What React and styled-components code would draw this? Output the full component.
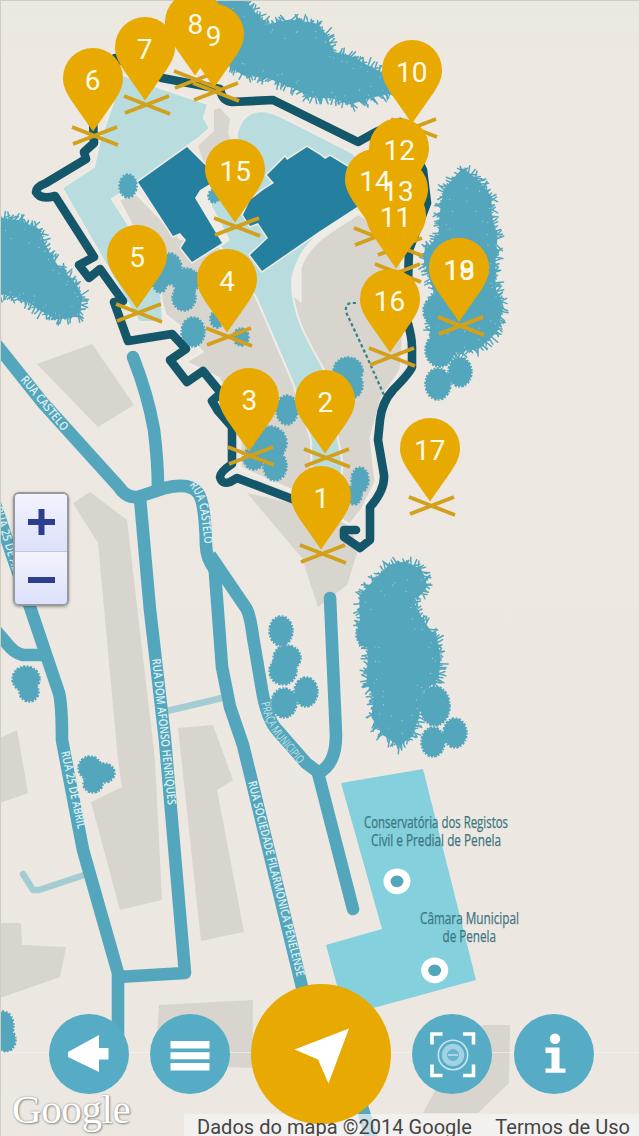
import React from 'react'
import styled, {createGlobalStyle} from 'styled-components'

const ROAD = '#54a6bc'
const WALL = '#14566a'
const GROUND = '#d8d4ce'
const PALE = '#b9dcde'
const CREAM = '#efece6'

const pins = [
  {n: 1, x: 321.3, y: 466},
  {n: 2, x: 325.3, y: 369.5},
  {n: 3, x: 249.3, y: 367.5},
  {n: 4, x: 227, y: 249},
  {n: 5, x: 137, y: 225},
  {n: 6, x: 92.7, y: 48.3},
  {n: 7, x: 144.7, y: 16.5},
  {n: 8, x: 195.3, y: -8},
  {n: 9, x: 213.5, y: 4},
  {n: 10, x: 411.7, y: 40.3},
  {n: 12, x: 399.3, y: 118.3},
  {n: 14, x: 375, y: 149},
  {n: 13, x: 398, y: 159},
  {n: 11, x: 395.5, y: 185},
  {n: 15, x: 235.3, y: 138.7},
  {n: 16, x: 389.5, y: 269},
  {n: 17, x: 429.7, y: 417.5},
  {n: 18, x: 459.3, y: 238},
  {n: 19, x: 459.3, y: 238},
]

// x, y, rx, ry
const bushes = [
  [438, 384, 12, 15], [460, 372, 11, 14], [436, 311, 12, 14], [440, 350, 14, 16],
  [435, 706, 14, 19], [433, 742, 11, 14], [455, 733, 11, 14], [366, 634, 9, 12],
  [281, 631, 11, 14], [287, 658, 13, 12], [283, 671, 13, 13], [284, 703, 12, 14], [306, 692, 11, 14],
  [26, 679, 13, 12], [29, 692, 9, 9],
  [90, 768, 11, 11], [104, 773, 10, 9], [93, 784, 9, 8],
  [3, 1026, 10, 14], [6, 1040, 9, 11],
  [128, 186, 8, 11], [170, 269, 11, 15], [160, 281, 7, 11], [186, 281, 13, 12], [184, 298, 11, 12],
  [193, 332, 11, 14], [217, 319, 6, 8], [241, 337, 7, 8], [287, 410, 10, 14],
  [270, 443, 16, 16], [275, 466, 11, 14], [254, 458, 10, 11],
  [348, 371, 14, 13], [353, 385, 9, 12], [360, 480, 8, 12], [354, 495, 7, 9], [214, 196, 5, 6],
]

const thickets = [
  [[215, -5], [246, 3], [256, 16], [268, 26], [290, 21], [316, 25], [326, 36], [332, 53], [350, 57], [366, 66], [382, 74], [392, 92], [372, 96], [350, 103], [334, 97], [312, 96], [292, 86], [270, 77], [244, 74], [225, 62]],
  [[-5, 218], [20, 222], [38, 230], [45, 248], [57, 267], [72, 281], [81, 297], [78, 315], [58, 318], [42, 310], [28, 300], [12, 294], [-5, 293]],
  [[463, 170], [477, 181], [490, 197], [490, 217], [496, 236], [494, 262], [494, 288], [502, 306], [496, 331], [479, 347], [460, 350], [436, 356], [431, 330], [438, 300], [430, 275], [424, 255], [440, 235], [441, 215], [445, 190]],
  [[405, 563], [420, 570], [426, 586], [412, 602], [421, 620], [436, 640], [439, 660], [437, 680], [421, 690], [418, 714], [412, 734], [399, 744], [384, 734], [373, 717], [375, 698], [368, 682], [369, 662], [369, 645], [362, 630], [361, 615], [361, 596], [376, 580], [390, 566]],
]

const rand = (i) => {
  const v = Math.sin(i * 127.1 + 11.7) * 43758.5453
  return v - Math.floor(v)
}

// short leaves growing outward from every side of the outline
const leaves = (pts) => {
  let d = ''
  let k = 1
  pts.forEach(([x1, y1], i) => {
    const [x2, y2] = pts[(i + 1) % pts.length]
    const len = Math.hypot(x2 - x1, y2 - y1)
    const out = Math.atan2(y2 - y1, x2 - x1) - Math.PI / 2
    for (let t = 0; t < len; t += 1.9) {
      const a = out + (rand(k) - 0.5) * 1.9
      const r = 4 + rand(k + 500) * 7
      const inset = rand(k + 900) * 3
      const x = x1 + ((x2 - x1) * t) / len - Math.cos(out) * inset
      const y = y1 + ((y2 - y1) * t) / len - Math.sin(out) * inset
      d += `M${x.toFixed(1)} ${y.toFixed(1)}l${(Math.cos(a) * r).toFixed(1)} ${(Math.sin(a) * r).toFixed(1)}`
      k++
    }
  })
  return d
}

const specks = (pts) => {
  const cx = pts.reduce((s, p) => s + p[0], 0) / pts.length
  const cy = pts.reduce((s, p) => s + p[1], 0) / pts.length
  return pts.flatMap(([x, y], i) => [0.93, 0.8].map((f, j) => {
    const g = f - rand(i * 3 + j) * 0.12
    return [cx + (x - cx) * g + rand(i + j) * 5, cy + (y - cy) * g + rand(i - j) * 5]
  }))
}

function Thicket({pts}) {
  return (
    <g>
      <polygon points={pts.join(' ')} fill={ROAD} stroke={ROAD} strokeWidth='3' strokeLinejoin='round' />
      <path d={leaves(pts)} stroke={ROAD} strokeWidth='1.5' strokeLinecap='round' />
      {specks(pts).map(([x, y], i) => <circle key={i} cx={x} cy={y} r='0.6' fill='#a5cdd6' />)}
    </g>
  )
}

function Bush({x, y, rx, ry}) {
  return (
    <g fill={ROAD} stroke={ROAD}>
      <ellipse cx={x} cy={y} rx={rx} ry={ry} strokeWidth='1' />
      <ellipse cx={x} cy={y} rx={rx} ry={ry} strokeWidth='3.5' strokeDasharray='1.6 1.1 2.4 1.5' />
    </g>
  )
}

function Terrain() {
  return (
    <Drawing viewBox='0 0 639 1136' fill='none'>
      <defs>
        <path id='castelo' d='M20 380 L64 433' />
        <path id='castelo2' d='M189 485 Q199 497 201 515 L205 546' />
        <path id='abril0' d='M-6 508 L16 583' />
        <path id='abril' d='M61 752 L78 830' />
        <path id='afonso' d='M152 659 L168 806' />
        <path id='praca' d='M261 703 Q266 726 277 738 L301 767' />
        <path id='penelense' d='M248 782 L297 978' />
      </defs>

      {/* city blocks */}
      <g fill={GROUND}>
        <path d='M37 364 92 344 134 405 98 427Z' />
        <path d='M73 503 90 492 127 520 155 760 162 900 120 910 91 802 122 787 118 760 98 543Z' />
        <path d='M178 728 213 725 233 780 217 790 244 932 201 941Z' />
        <path d='M0 738 17 730 28 793 0 803Z' />
        <path d='M0 923H21L22 945 66 947 60 977 0 998Z' />
        <path d='M159 1005 253 1000 252 1068 155 1064Z' />
        <path d='M483 1025H510L509 1083 478 1113H423L452 1060Z' />
        <path d='M247 493 302 558 318 607 347 585 358 550 345 510 300 505Z' />
      </g>

      {/* castle grounds */}
      <path d='M118 199 137 194 180 238 215 245 255 262 300 300 300 250 355 212 400 235 404 330 401 370 382 398 371 438 376 482 362 510 350 525 300 494 240 468 240 420 218 378 185 362 202 352 178 325 165 315 150 262Z' fill={GROUND} stroke={CREAM} strokeWidth='3' />
      <path d='M214 110 220 108 230 119 228 133 232 146 206 168 198 146 214 131Z' fill={GROUND} />
      <path d='M123 75 160 88 187 97 208 104 204 118 210 128 200 137 138 182 112 199 160 275 163 322 139 322 62 188 94 167 100 140Z' fill={PALE} stroke={CREAM} strokeWidth='2' />
      <path d='M236 150 237 133Q242 112 261 111 270 111 286 119L353 153 370 175 357 215C330 232 292 254 292 282 292 320 314 350 325 372L342 460V490H312L311 440 293 383 256 297 205 225 200 185Z' fill={PALE} stroke={CREAM} strokeWidth='2' />
      <path d='M357 210C330 226 296 250 296 280L297 296' stroke={CREAM} strokeWidth='7' />
      <path d='M206 166 215 176 212 206 230 240 222 246 194 198 209 183Z' fill={CREAM} />
      <g fill='#257f9e' stroke={CREAM} strokeWidth='3' paintOrder='stroke'>
        <path d='M187 147 206 166 210 184 200 190 195 198 222 243 192 262 181 248 186 240 180 233 173 236 138 182Z' />
        <path d='M307 147 287 160 285 157 267 175 274 183 263 190 250 200 243 215 250 226 258 223 268 238 250 255 262 271 320 231 357 207 372 190 353 170 330 156 325 159 320 155Z' />
      </g>
      <path d='M356 303H350Q345 305 346 312L353 327 367 357 384 395' stroke='#35808f' strokeWidth='2.2' strokeDasharray='3.2 2.6' />

      {thickets.map((pts, i) => <Thicket key={i} pts={pts} />)}
      {bushes.map(([x, y, rx, ry], i) => <Bush key={i} x={x} y={y} rx={rx} ry={ry} />)}

      {/* castle wall */}
      <path
        d='M300 502 237 478 230 482Q222 485 220 477 220 472 232 464V427L218 411 212 401 221 393 203 371 187 382 170 360 186 349 172 334 128 341 114 302 123 301 100 269 89 278 79 265 94 257 55 196Q40 200 36 192 36 187 46 183L86 159 84 152 94 143 93 120 98 75 115 58 162 78 220 89Q222 101 232 102L273 100 358 142 376 132 400 122 423 170 427 203 409 250 407 320Q412 337 412 347V367Q410 373 393 390 382 402 380 420L378 440 384 475Q385 490 370 507V540L360 548 344 537V530H356'
        stroke={WALL}
        strokeWidth='8.6'
        strokeLinejoin='round'
        strokeLinecap='round'
      />

      {/* roads */}
      <g stroke='#a3cdd3' strokeWidth='6.5' strokeLinecap='round' strokeLinejoin='round'>
        <path d='M167 711 222 698' />
        <path d='M23 874 33 890H39L84 875' />
      </g>
      <g stroke={ROAD} strokeWidth='12.6' strokeLinejoin='round'>
        <path d='M-8 339 43 403 119 487Q126 498 138 497L165 488Q190 482 198 493 205 502 206 545 206 558 215 570' />
        <path d='M133 357Q148 395 154 430 158 462 158 488' strokeLinecap='round' />
        <path d='M140 498 150 610 165 740 185 973 118 977' />
        <path d='M214 560 217 600 222 667 230 707 243 745 302 987 360 1100 372 1140' />
        <path d='M210 555 246 608Q250 614 253 637L262 690Q267 720 278 731L306 763 318 772' />
        <path d='M330 598 336 735Q336 765 318 773L353 909' strokeLinecap='round' />
        <path d='M-8 495 12 555 30 607 59 693Q62 705 62 740L83 850 118 973V1040' />
        <path d='M-8 626 4 640Q15 655 25 655H46' />
      </g>

      <Street><textPath href='#castelo' textLength='67' lengthAdjust='spacingAndGlyphs'>RUA CASTELO</textPath></Street>
      <Street><textPath href='#castelo2' textLength='62' lengthAdjust='spacingAndGlyphs'>RUA CASTELO</textPath></Street>
      <Street><textPath href='#abril0' textLength='74' lengthAdjust='spacingAndGlyphs'>RUA 25 DE ABR</textPath></Street>
      <Street><textPath href='#abril' textLength='79' lengthAdjust='spacingAndGlyphs'>RUA 25 DE ABRIL</textPath></Street>
      <Street><textPath href='#afonso' textLength='147' lengthAdjust='spacingAndGlyphs'>RUA DOM AFONSO HENRIQUES</textPath></Street>
      <Street $faint><textPath href='#praca' textLength='73' lengthAdjust='spacingAndGlyphs'>PRAÇA MUNICIPIO</textPath></Street>
      <Street><textPath href='#penelense' textLength='201' lengthAdjust='spacingAndGlyphs'>RUA SOCIEDADE FILARMÓNICA PENELENSE</textPath></Street>

      {/* public buildings */}
      <path d='M341 783 423 769 476 980 377 1007 345 1015 326 945 382 929Z' fill='#84d0dd' />
      <Place x='364' y='827.5' textLength='144' lengthAdjust='spacingAndGlyphs'>Conservatória dos Registos</Place>
      <Place x='371' y='845.5' textLength='130' lengthAdjust='spacingAndGlyphs'>Civil e Predial de Penela</Place>
      <Place x='420' y='923.5' textLength='99' lengthAdjust='spacingAndGlyphs'>Câmara Municipal</Place>
      <Place x='442.5' y='941.5' textLength='53.5' lengthAdjust='spacingAndGlyphs'>de Penela</Place>
      <g fill={ROAD} stroke='#fff' strokeWidth='7'>
        <ellipse cx='397' cy='881.3' rx='10' ry='9.4' />
        <ellipse cx='434.7' cy='970.3' rx='10' ry='9.4' />
      </g>
      <path d='M0 1052.5H639' stroke='#f6f4f0' opacity='.6' />
      <path d='M0 .5H639M.5 0V1136' stroke='#cfccc4' />
    </Drawing>
  )
}

function App() {
  return (
    <Screen>
      <GlobalStyle />
      <Terrain />
      {pins.map((p) => (
        <Cross key={p.n} $x={p.x} $y={p.y} viewBox='0 0 50 22'>
          <path d='M2 2 48 20M3 19 47 2' stroke='#d3a01b' strokeWidth='3.8' />
        </Cross>
      ))}
      {pins.map((p) => (
        <Pin key={p.n} $x={p.x} $y={p.y} viewBox='0 0 60 84'>
          <path d='M30 83.5 8 52C3 44 0 38 0 30A30 30 0 0 1 60 30C60 38 57 44 52 52Z' fill='#e8a900' />
        </Pin>
      ))}
      {pins.map((p) => (
        <PinNumber key={p.n} $x={p.x} $y={p.y}>{p.n}</PinNumber>
      ))}

      <ZoomControl>
        <ZoomButton aria-label='+'>
          <svg width='27' height='27' viewBox='0 0 27 27'><path d='M0 13H27M13.5 0V26' stroke='#2c3f8c' strokeWidth='6' /></svg>
        </ZoomButton>
        <ZoomButton aria-label='-'>
          <svg width='27' height='27' viewBox='0 0 27 27'><path d='M0 15H27' stroke='#2c3f8c' strokeWidth='6' /></svg>
        </ZoomButton>
      </ZoomControl>

      <Logo>Google</Logo>
      <Credits>
        <CreditText>Dados do mapa ©2014 Google</CreditText>
        <CreditText>Termos de Uso</CreditText>
      </Credits>

      <Toolbar>
        <RoundButton>
          <svg viewBox='0 0 80 80'><path d='M19 38 50 21V34H59.5V45.5H50V58L19 43Z' fill='#fff' /></svg>
        </RoundButton>
        <RoundButton>
          <svg viewBox='0 0 80 80'><path d='M20.5 27H59.5V34.5H20.5ZM20.5 38.3H59.5V45.3H20.5ZM20.5 49H59.5V56.5H20.5Z' fill='#fff' /></svg>
        </RoundButton>
        <RoundButton $main>
          <svg viewBox='0 0 140 140'><path d='M43.5 65.500 98 44.500 77.500 99.500 67 75.500Z' fill='#fff' /></svg>
        </RoundButton>
        <RoundButton>
          <svg viewBox='0 0 80 80' fill='none'>
            <path d='M20 30.5V20H30.500M51 20H61.5V30.500M61.5 50.500V61.500H51M30.5 61.500H20V50.500' stroke='#fff' strokeWidth='3.6' />
            <circle cx='41' cy='41' r='14.7' stroke='#c9e6f0' strokeWidth='1.6' />
            <circle cx='41' cy='41' r='8.5' stroke='#a2d3e4' strokeWidth='5.5' />
            <circle cx='41' cy='41' r='5.8' fill='#67b4cc' />
            <path d='M36 41H46' stroke='#c9e6f0' strokeWidth='1.4' />
          </svg>
        </RoundButton>
        <RoundButton>
          <svg viewBox='0 0 80 80' fill='#fff'>
            <circle cx='41' cy='24.7' r='5.2' />
            <path d='M31.500 33.500H45.500V54.500H51.500V58.700H31.500V54.500H37.500V39H31.500Z' />
          </svg>
        </RoundButton>
      </Toolbar>
    </Screen>
  )
}

const GlobalStyle = createGlobalStyle`
body{
  margin:0;
  background:#ece8e1;
}
`
const Screen = styled.div`
position:relative;
width:639px;
height:1136px;
overflow:hidden;
background:linear-gradient(#ebe9df, #ede8e1 60px, #ece8e1);
font-family:Roboto, "Liberation Sans", sans-serif;
`
const Drawing = styled.svg`
display:block;
width:639px;
height:1136px;
`
const Street = styled.text`
font-family:"Open Sans", sans-serif;
font-size:12px;
font-weight:${(p) => (p.$faint ? 400 : 600)};
fill:${(p) => (p.$faint ? '#c4e2e8' : '#dceff2')};
`
const Place = styled.text`
font-family:"Open Sans", sans-serif;
font-size:16px;
fill:#3c7580;
stroke:#3c7580;
stroke-width:.25px;
`
const Cross = styled.svg`
position:absolute;
left:${(p) => p.$x - 23}px;
top:${(p) => p.$y + 77}px;
width:50px;
height:22px;
fill:none;
`
const Pin = styled.svg`
position:absolute;
left:${(p) => p.$x - 30}px;
top:${(p) => p.$y}px;
width:60px;
height:84px;
`
const PinNumber = styled.div`
position:absolute;
left:${(p) => p.$x - 30}px;
top:${(p) => p.$y + 17}px;
width:60px;
font-size:28px;
line-height:32px;
text-align:center;
color:#fffbe8;
`
const ZoomControl = styled.div`
position:absolute;
left:13px;
top:492px;
width:56px;
height:114px;
box-sizing:border-box;
display:flex;
flex-direction:column;
border:2px solid #98989f;
border-radius:6px;
overflow:hidden;
box-shadow:0 1px 3px rgba(0,0,0,.35);
`
const ZoomButton = styled.button`
flex:1;
display:flex;
align-items:center;
justify-content:center;
padding:0;
border:0;
background:linear-gradient(#f3f3fc, #dce1fb);
&:first-child{
  flex:0 0 57px;
}
& + &{
  border-top:1px solid #c3c8df;
}
`
const Logo = styled.div`
position:absolute;
left:12px;
top:1086px;
font-family:"Liberation Serif", serif;
font-size:41px;
line-height:46px;
letter-spacing:-.4px;
color:#fff;
text-shadow:0 0 2px #8f8f8f, 1px 1px 2px #8a8a8a;
`
const Credits = styled.div`
position:absolute;
left:184px;
right:0;
top:1114px;
height:22px;
box-sizing:border-box;
padding:0 9px 0 13px;
display:flex;
justify-content:space-between;
background:rgba(245,245,245,.7);
`
const CreditText = styled.span`
position:relative;
z-index:2;
font-size:20px;
line-height:26px;
letter-spacing:.04px;
white-space:nowrap;
color:#444;
`
const Toolbar = styled.div`
position:absolute;
z-index:1;
left:48.5px;
top:983.5px;
display:flex;
align-items:center;
gap:21.3px;
`
const RoundButton = styled.button`
width:${(p) => (p.$main ? 140 : 80)}px;
height:${(p) => (p.$main ? 140 : 80)}px;
padding:0;
border:0;
border-radius:50%;
background:${(p) => (p.$main ? '#e8a900' : '#56abc5')};
svg{
  display:block;
  width:100%;
  height:100%;
}
`

export default App
